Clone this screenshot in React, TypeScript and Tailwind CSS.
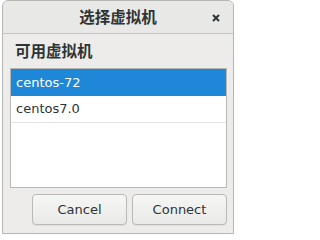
export default function App() {
  const vms = ['centos-72', 'centos7.0']
  const selected = 0

  return (
    <div className="w-[247px] h-[237px] bg-white font-['DejaVu_Sans','Noto_Sans_CJK_SC',sans-serif] text-[#2e3436]">
      <div className="ml-[2px] w-[232px] h-[234px] flex flex-col border border-[#b5b5b2] rounded-t-[6px] bg-[#edecea] overflow-hidden">
        {/* title bar */}
        <div className="relative h-[33px] shrink-0 flex items-center justify-center bg-[#e8e8e6] border-b border-[#c4c4c1]">
          <span className="text-[15.5px] font-bold font-['Noto_Sans_CJK_SC',sans-serif] leading-none">选择虚拟机</span>
          <svg
            className="absolute right-[13px] top-[13px]"
            width="8"
            height="8"
            viewBox="0 0 8 8"
          >
            <path d="M1 1L7 7M7 1L1 7" stroke="#2e3436" strokeWidth="2" />
          </svg>
        </div>

        <div className="flex flex-col pl-[7px] pr-[6px]">
          <div className="h-[34px] flex items-center pl-[5px] text-[15.5px] font-bold font-['Noto_Sans_CJK_SC',sans-serif]">
            可用虚拟机
          </div>

          {/* vm list */}
          <div className="h-[120px] bg-white border border-[#b7b7b4]">
            {vms.map((vm, i) => (
              <div
                key={vm}
                className={
                  i === selected
                    ? 'h-[27px] flex items-center pl-[5px] text-[13px] bg-[#1f87d8] text-white'
                    : 'h-[27px] flex items-center pl-[5px] text-[13px] border-b border-[#e4e4e2]'
                }
              >
                {vm}
              </div>
            ))}
          </div>

          <div className="flex justify-end gap-[5px] mt-[6px]">
            <button className="w-[95px] h-[31px] rounded-[4px] border border-[#b9b9b6] bg-gradient-to-b from-[#f6f6f5] to-[#e9e9e7] shadow-[0_1px_0_rgba(0,0,0,0.06)] text-[13px] text-[#2e3436]">
              Cancel
            </button>
            <button className="w-[95px] h-[31px] rounded-[4px] border border-[#b9b9b6] bg-gradient-to-b from-[#f6f6f5] to-[#e9e9e7] shadow-[0_1px_0_rgba(0,0,0,0.06)] text-[13px] text-[#2e3436]">
              Connect
            </button>
          </div>
        </div>
      </div>
    </div>
  )
}
